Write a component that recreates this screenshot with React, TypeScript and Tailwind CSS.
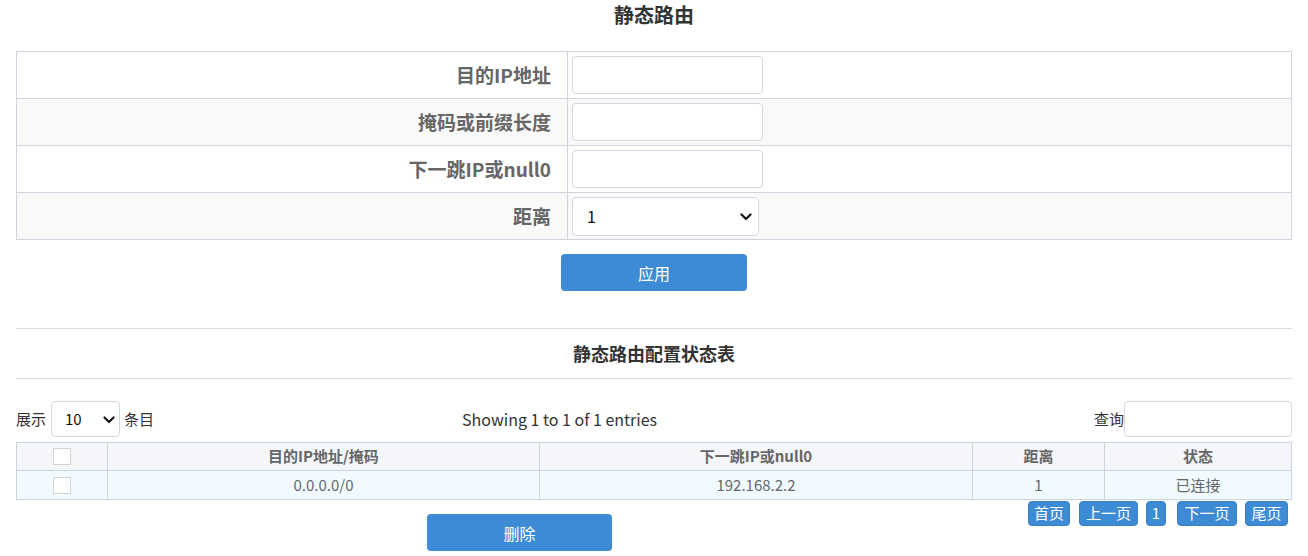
import React from "react";

const formRows = [
  { label: "目的IP地址", kind: "input" },
  { label: "掩码或前缀长度", kind: "input" },
  { label: "下一跳IP或null0", kind: "input" },
  { label: "距离", kind: "select" },
];

const pages = [
  { text: "首页", cls: "w-[42px]" },
  { text: "上一页", cls: "w-[59px] ml-[9px]" },
  { text: "1", cls: "w-[20px] ml-[8px]" },
  { text: "下一页", cls: "w-[60px] ml-[11px]" },
  { text: "尾页", cls: "w-[43px] ml-[8px]" },
];

function Chevron({ className }: { className?: string }) {
  return (
    <svg className={className} width="12" height="8" viewBox="0 0 12 8" fill="none">
      <path d="M1.5 1.5L6 6l4.5-4.5" stroke="#111" strokeWidth="2.2" strokeLinecap="round" strokeLinejoin="round" />
    </svg>
  );
}

function Checkbox() {
  return <div className="w-[18px] h-[17px] bg-white border border-[#d4d4d4] mx-auto" />;
}

export default function App() {
  return (
    <div className="w-[1308px] h-[556px] bg-white overflow-hidden font-['Noto_Sans_CJK_SC',sans-serif] text-[#333]">
      {/* Title */}
      <div className="h-[51px] pt-[1px] text-center text-[20px] font-bold leading-[28px] text-[#333]">静态路由</div>

      {/* Form table */}
      <div className="mx-[16px] w-[1276px] border-t border-x border-[#cfd4e0]">
        {formRows.map((row, i) => (
          <div
            key={row.label}
            className={`flex h-[47px] border-b border-[#cfd4e0] ${i % 2 === 1 ? "bg-[#f9f9f9]" : "bg-white"}`}
          >
            <div className="w-[551px] border-r border-[#cfd4e0] flex items-center justify-end pr-[16px] text-[19px] font-bold text-[#666]">
              {row.label}
            </div>
            <div className="flex items-center pl-[4px]">
              {row.kind === "input" ? (
                <div className="w-[191px] h-[38px] bg-white border border-[#d4d7de] rounded-[4px]" />
              ) : (
                <div className="relative w-[187px] h-[39px] bg-white border border-[#d4d7de] rounded-[4px] flex items-center pl-[14px] text-[16px] text-[#111]">
                  1
                  <Chevron className="absolute right-[6px] top-[15px]" />
                </div>
              )}
            </div>
          </div>
        ))}
      </div>

      {/* Apply */}
      <div className="flex justify-center pt-[14px]">
        <button className="w-[186px] h-[37px] rounded-[4px] bg-[#3e8bd5] text-white text-[16px]">应用</button>
      </div>

      {/* Second section */}
      <div className="mx-[16px] mt-[37px] border-t border-[#dedede]" />
      <div className="h-[49px] flex items-center justify-center text-[18px] font-bold text-[#333]">静态路由配置状态表</div>
      <div className="mx-[16px] border-t border-[#dedede]" />

      {/* Controls */}
      <div className="mx-[16px] mt-[22px] h-[36px] flex items-center text-[15px]">
        <span>展示</span>
        <div className="relative ml-[5px] w-[69px] h-[36px] border border-[#d4d7de] rounded-[4px] flex items-center pl-[13px] text-[15px] text-[#111]">
          10
          <Chevron className="absolute right-[4px] top-[14px]" />
        </div>
        <span className="ml-[4px]">条目</span>
        <span className="ml-[308px] text-[16px] text-[#333]">Showing 1 to 1 of 1 entries</span>
        <span className="ml-auto">查询</span>
        <div className="w-[168px] h-[36px] border border-[#d4d7de] rounded-[4px]" />
      </div>

      {/* Data table */}
      <div className="mx-[16px] mt-[5px] w-[1276px] border-t border-x border-[#cdd3e0] text-[15px] text-[#666]">
        <div className="grid grid-cols-[91px_432px_433px_132px_186px] h-[28px] bg-[#f5f6fa] border-b border-[#cdd3e0] font-bold">
          <div className="flex items-center border-r border-[#cdd3e0]"><Checkbox /></div>
          <div className="flex items-center justify-center border-r border-[#cdd3e0]">目的IP地址/掩码</div>
          <div className="flex items-center justify-center border-r border-[#cdd3e0]">下一跳IP或null0</div>
          <div className="flex items-center justify-center border-r border-[#cdd3e0]">距离</div>
          <div className="flex items-center justify-center">状态</div>
        </div>
        <div className="grid grid-cols-[91px_432px_433px_132px_186px] h-[29px] bg-[#f0faff] border-b border-[#cdd3e0]">
          <div className="flex items-center border-r border-[#cdd3e0]"><Checkbox /></div>
          <div className="flex items-center justify-center border-r border-[#cdd3e0]">0.0.0.0/0</div>
          <div className="flex items-center justify-center border-r border-[#cdd3e0]">192.168.2.2</div>
          <div className="flex items-center justify-center border-r border-[#cdd3e0]">1</div>
          <div className="flex items-center justify-center">已连接</div>
        </div>
      </div>

      {/* Bottom: delete + pagination */}
      <div className="mx-[16px] flex items-start">
        <button className="ml-[411px] mt-[14px] w-[185px] h-[37px] rounded-[4px] bg-[#3e8bd5] text-white text-[16px]">删除</button>
        <div className="ml-auto mr-[4px] mt-[1px] flex">
          {pages.map((p) => (
            <div
              key={p.text}
              className={`${p.cls} h-[25px] rounded-[4px] bg-[#3e8bd5] text-white text-[15px] flex items-center justify-center border border-[#3a7fc4]`}
            >
              {p.text}
            </div>
          ))}
        </div>
      </div>
    </div>
  );
}
